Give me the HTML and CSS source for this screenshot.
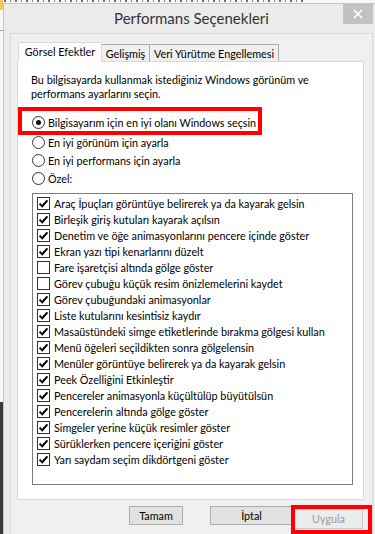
FILE: index.html
```html
<!DOCTYPE html>
<html lang="tr">
<head>
<meta charset="utf-8">
<title>Performans Seçenekleri</title>
<link rel="stylesheet" href="styles.css">
</head>
<body>
<div class="window">
  <div class="titlebar">
    <div class="title">Performans Seçenekleri</div>
    <div class="close">
      <svg width="10" height="10" viewBox="0 0 10 10"><path d="M1 1 L9 9 M9 1 L1 9" stroke="#fff" stroke-width="1.7" fill="none"/></svg>
    </div>
  </div>
  <div class="client">
    <div class="tabs">
      <div class="tab tab-active tab-visual">Görsel Efektler</div>
      <div class="tab tab-adv">Gelişmiş</div>
      <div class="tab tab-dep">Veri Yürütme Engellemesi</div>
    </div>
    <div class="page">
      <p class="desc">Bu bilgisayarda kullanmak istediğiniz Windows görünüm ve<br>performans ayarlarını seçin.</p>
      <div class="radios">
        <div class="radio radio-first"><span class="circle checked"></span>Bilgisayarım için en iyi olanı Windows seçsin</div>
        <div class="radio"><span class="circle"></span>En iyi görünüm için ayarla</div>
        <div class="radio"><span class="circle"></span>En iyi performans için ayarla</div>
        <div class="radio"><span class="circle"></span>Özel:</div>
      </div>
      <div class="listbox">
        <div class="item"><span class="cb"><svg width="11" height="11" viewBox="0 0 11 11"><path d="M1.6 5.6 L4.2 8.2 L9.4 2.4" stroke="#000" stroke-width="2" fill="none"/></svg></span>Araç İpuçları görüntüye belirerek ya da kayarak gelsin</div>
        <div class="item"><span class="cb"><svg width="11" height="11" viewBox="0 0 11 11"><path d="M1.6 5.6 L4.2 8.2 L9.4 2.4" stroke="#000" stroke-width="2" fill="none"/></svg></span>Birleşik giriş kutuları kayarak açılsın</div>
        <div class="item"><span class="cb"><svg width="11" height="11" viewBox="0 0 11 11"><path d="M1.6 5.6 L4.2 8.2 L9.4 2.4" stroke="#000" stroke-width="2" fill="none"/></svg></span>Denetim ve öğe animasyonlarını pencere içinde göster</div>
        <div class="item"><span class="cb"><svg width="11" height="11" viewBox="0 0 11 11"><path d="M1.6 5.6 L4.2 8.2 L9.4 2.4" stroke="#000" stroke-width="2" fill="none"/></svg></span>Ekran yazı tipi kenarlarını düzelt</div>
        <div class="item"><span class="cb"></span>Fare işaretçisi altında gölge göster</div>
        <div class="item"><span class="cb"></span>Görev çubuğu küçük resim önizlemelerini kaydet</div>
        <div class="item"><span class="cb"><svg width="11" height="11" viewBox="0 0 11 11"><path d="M1.6 5.6 L4.2 8.2 L9.4 2.4" stroke="#000" stroke-width="2" fill="none"/></svg></span>Görev çubuğundaki animasyonlar</div>
        <div class="item"><span class="cb"><svg width="11" height="11" viewBox="0 0 11 11"><path d="M1.6 5.6 L4.2 8.2 L9.4 2.4" stroke="#000" stroke-width="2" fill="none"/></svg></span>Liste kutularını kesintisiz kaydır</div>
        <div class="item"><span class="cb"><svg width="11" height="11" viewBox="0 0 11 11"><path d="M1.6 5.6 L4.2 8.2 L9.4 2.4" stroke="#000" stroke-width="2" fill="none"/></svg></span>Masaüstündeki simge etiketlerinde bırakma gölgesi kullan</div>
        <div class="item"><span class="cb"><svg width="11" height="11" viewBox="0 0 11 11"><path d="M1.6 5.6 L4.2 8.2 L9.4 2.4" stroke="#000" stroke-width="2" fill="none"/></svg></span>Menü öğeleri seçildikten sonra gölgelensin</div>
        <div class="item"><span class="cb"><svg width="11" height="11" viewBox="0 0 11 11"><path d="M1.6 5.6 L4.2 8.2 L9.4 2.4" stroke="#000" stroke-width="2" fill="none"/></svg></span>Menüler görüntüye belirerek ya da kayarak gelsin</div>
        <div class="item"><span class="cb"><svg width="11" height="11" viewBox="0 0 11 11"><path d="M1.6 5.6 L4.2 8.2 L9.4 2.4" stroke="#000" stroke-width="2" fill="none"/></svg></span>Peek Özelliğini Etkinleştir</div>
        <div class="item"><span class="cb"><svg width="11" height="11" viewBox="0 0 11 11"><path d="M1.6 5.6 L4.2 8.2 L9.4 2.4" stroke="#000" stroke-width="2" fill="none"/></svg></span>Pencereler animasyonla küçültülüp büyütülsün</div>
        <div class="item"><span class="cb"><svg width="11" height="11" viewBox="0 0 11 11"><path d="M1.6 5.6 L4.2 8.2 L9.4 2.4" stroke="#000" stroke-width="2" fill="none"/></svg></span>Pencerelerin altında gölge göster</div>
        <div class="item"><span class="cb"><svg width="11" height="11" viewBox="0 0 11 11"><path d="M1.6 5.6 L4.2 8.2 L9.4 2.4" stroke="#000" stroke-width="2" fill="none"/></svg></span>Simgeler yerine küçük resimler göster</div>
        <div class="item"><span class="cb"><svg width="11" height="11" viewBox="0 0 11 11"><path d="M1.6 5.6 L4.2 8.2 L9.4 2.4" stroke="#000" stroke-width="2" fill="none"/></svg></span>Sürüklerken pencere içeriğini göster</div>
        <div class="item"><span class="cb"><svg width="11" height="11" viewBox="0 0 11 11"><path d="M1.6 5.6 L4.2 8.2 L9.4 2.4" stroke="#000" stroke-width="2" fill="none"/></svg></span>Yarı saydam seçim dikdörtgeni göster</div>
      </div>
      <div class="mark mark-radio"></div>
    </div>
    <div class="buttons">
      <div class="btn btn-ok">Tamam</div>
      <div class="btn btn-cancel">İptal</div>
      <div class="btn btn-apply">Uygula</div>
    </div>
    <div class="mark mark-apply"></div>
  </div>
</div>
</body>
</html>
```

FILE: styles.css
```css
html, body {
  margin: 0;
  height: 100%;
  overflow: hidden;
}

body {
  padding: 3px 0 0 3px;
  box-sizing: border-box;
  font-family: "Segoe UI", Lato, "Noto Sans", sans-serif;
  font-size: 10.8px;
  color: #000;
  background:
    linear-gradient(#f0c75e, #f0c75e) 0 0 / 3px 10px no-repeat,
    linear-gradient(#a0a0a0, #a0a0a0) 0 30px / 3px 1px no-repeat,
    linear-gradient(#3a3a3a, #3a3a3a) 0 402px / 3px 200px no-repeat,
    repeating-linear-gradient(90deg, #6a6a6a 0 2px, transparent 2px 6px, #8a8a8a 6px 7px, transparent 7px 11px) 4px 0 / 300px 2px no-repeat,
    #f7f7f7;
}

.window {
  width: 372px;
  height: 531px;
  box-sizing: border-box;
  background: #ebebeb;
  border: 1px solid #c6c6c6;
  border-bottom: none;
  border-right: none;
  padding: 0 0 0 6px;
}

.titlebar {
  height: 29px;
  display: grid;
  grid-template-columns: 30px 1fr 30px;
  align-items: start;
  margin-right: 2px;
}

.title {
  grid-column: 2;
  align-self: center;
  text-align: center;
  font-size: 15px;
  color: #333;
  line-height: 18px;
  padding-bottom: 1px;
}

.close {
  grid-column: 3;
  height: 20px;
  background: #c2c2c2;
  display: flex;
  align-items: center;
  justify-content: center;
}

.close svg {
  display: block;
  margin-top: -1px;
}

.client {
  position: relative;
  width: 363px;
  height: 501px;
  box-sizing: border-box;
  background: #f0f0f0;
  border: 1px solid #d8d8d8;
  border-bottom: none;
  padding: 8px 8px 0 6px;
}

.tabs {
  position: relative;
  z-index: 1;
  display: flex;
  align-items: flex-end;
  height: 20px;
  margin: 0 0 -1px 1px;
}

.tab {
  box-sizing: border-box;
  text-align: center;
  white-space: nowrap;
}

.tab-active {
  height: 20px;
  background: #fff;
  border: 1px solid #d9d9d9;
  border-bottom: none;
  line-height: 16px;
  padding-top: 1px;
}

.tab-adv,
.tab-dep {
  height: 18px;
  background: #f0f0f0;
  border: 1px solid #acacac;
  border-left: none;
  border-bottom-color: #d9d9d9;
  line-height: 15px;
  padding-top: 1px;
}

.tab-visual { width: 84px; }
.tab-adv { width: 48px; }
.tab-dep { width: 129px; }

.page {
  position: relative;
  box-sizing: border-box;
  height: 439px;
  background: #fff;
  border: 1px solid #d9d9d9;
  padding: 11px 10px 0 13px;
}

.desc {
  margin: 0;
  line-height: 14px;
}

.radios {
  margin-top: 12px;
  margin-left: 1px;
}

.radio {
  height: 18px;
  display: flex;
  align-items: center;
  white-space: nowrap;
}

.radio-first {
  margin-bottom: 2px;
}

.circle {
  width: 13px;
  height: 13px;
  box-sizing: border-box;
  border: 1px solid #333;
  border-radius: 50%;
  background: #fff;
  margin-right: 3px;
  display: flex;
  align-items: center;
  justify-content: center;
  flex: none;
}

.circle.checked::after {
  content: "";
  width: 5px;
  height: 5px;
  border-radius: 50%;
  background: #111;
}

.listbox {
  margin: 6px 0 0 1px;
  width: 321px;
  height: 292px;
  box-sizing: border-box;
  border: 1px solid #7d7d7d;
  padding: 1px 0 0 4px;
}

.item {
  height: 16px;
  display: flex;
  align-items: center;
  white-space: nowrap;
}

.cb {
  width: 13px;
  height: 13px;
  box-sizing: border-box;
  border: 1px solid #333;
  background: #fff;
  margin-right: 4px;
  flex: none;
  display: flex;
  align-items: center;
  justify-content: center;
}

.cb svg {
  display: block;
}

.buttons {
  display: flex;
  justify-content: flex-end;
  align-items: flex-start;
  margin-top: 6px;
  padding-right: 1px;
}

.btn {
  box-sizing: border-box;
  height: 19px;
  line-height: 17px;
  text-align: center;
  background: #e1e1e1;
  border: 1px solid #adadad;
}

.btn-ok {
  width: 54px;
  margin-right: 27px;
}

.btn-cancel {
  width: 83px;
  margin-right: 1px;
}

.btn-apply {
  width: 69px;
  height: 20px;
  margin-top: 3px;
  background: #ececec;
  border-color: #c9c9c9;
  color: #9c9c9c;
  line-height: 18px;
}

.mark {
  position: absolute;
  box-sizing: border-box;
  border: 4px solid #f00;
}

.mark-radio {
  left: 0;
  top: 45px;
  width: 244px;
  height: 28px;
}

.mark-apply {
  left: 280px;
  top: 471px;
  width: 81px;
  height: 29px;
}
```
